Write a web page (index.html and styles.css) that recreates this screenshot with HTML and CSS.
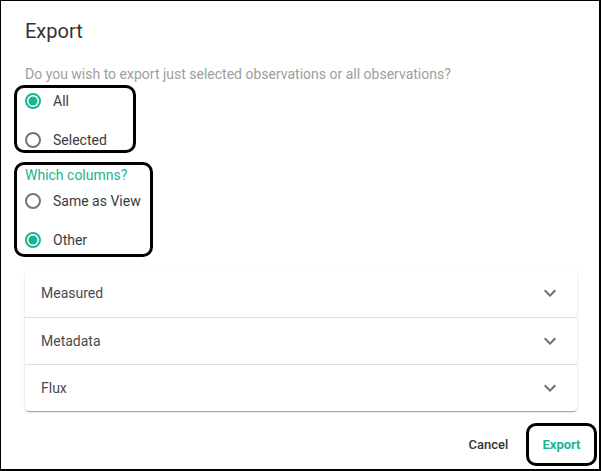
FILE: index.html
```html
<!DOCTYPE html>
<html>
<head>
<meta charset="utf-8">
<link rel="stylesheet" href="styles.css">
</head>
<body>
<div class="dialog">
  <h1 class="title">Export</h1>
  <p class="subtitle">Do you wish to export just selected observations or all observations?</p>

  <div class="group group-a">
    <label class="radio-row">
      <svg class="radio" viewBox="0 0 20 20" width="20" height="20"><circle cx="10" cy="10" r="7" fill="none" stroke="#1ab394" stroke-width="2"/><circle cx="10" cy="10" r="4.5" fill="#1ab394"/></svg>
      <span>All</span>
    </label>
    <label class="radio-row">
      <svg class="radio" viewBox="0 0 20 20" width="20" height="20"><circle cx="10" cy="10" r="7" fill="none" stroke="#757575" stroke-width="2"/></svg>
      <span>Selected</span>
    </label>
  </div>

  <div class="group group-b">
    <div class="group-label">Which columns?</div>
    <label class="radio-row">
      <svg class="radio" viewBox="0 0 20 20" width="20" height="20"><circle cx="10" cy="10" r="7" fill="none" stroke="#757575" stroke-width="2"/></svg>
      <span>Same as View</span>
    </label>
    <label class="radio-row">
      <svg class="radio" viewBox="0 0 20 20" width="20" height="20"><circle cx="10" cy="10" r="7" fill="none" stroke="#1ab394" stroke-width="2"/><circle cx="10" cy="10" r="4.5" fill="#1ab394"/></svg>
      <span>Other</span>
    </label>
  </div>

  <div class="accordion">
    <div class="panel">
      <span>Measured</span>
      <svg class="chev" viewBox="0 0 24 24" width="24" height="24"><path d="M7.41 8.59L12 13.17l4.59-4.58L18 10l-6 6-6-6 1.41-1.41z" fill="#6f6f6f"/></svg>
    </div>
    <div class="panel">
      <span>Metadata</span>
      <svg class="chev" viewBox="0 0 24 24" width="24" height="24"><path d="M7.41 8.59L12 13.17l4.59-4.58L18 10l-6 6-6-6 1.41-1.41z" fill="#6f6f6f"/></svg>
    </div>
    <div class="panel">
      <span>Flux</span>
      <svg class="chev" viewBox="0 0 24 24" width="24" height="24"><path d="M7.41 8.59L12 13.17l4.59-4.58L18 10l-6 6-6-6 1.41-1.41z" fill="#6f6f6f"/></svg>
    </div>
  </div>

  <div class="actions">
    <button class="btn btn-cancel">Cancel</button>
    <button class="btn btn-export">Export</button>
  </div>
</div>
</body>
</html>
```

FILE: styles.css
```css
* { box-sizing: border-box; }
html, body { margin: 0; padding: 0; background: #fff; }
body { font-family: Roboto, "Noto Sans", Arial, sans-serif; }

.dialog {
  width: 601px;
  height: 471px;
  border-style: solid;
  border-color: #000;
  border-width: 1px 2px 2px 1px;
  padding: 0 0 0 24px;
  display: flex;
  flex-direction: column;
  overflow: hidden;
}

.title {
  margin: 14px 0 0;
  font-size: 20px;
  line-height: 32px;
  font-weight: 400;
  color: #333;
}

.subtitle {
  margin: 17px 0 0;
  font-size: 14px;
  line-height: 20px;
  color: #9e9e9e;
}

.group {
  border: 3px solid #000;
  border-radius: 10px;
  margin-left: -11px;
  padding-left: 6px;
  display: flex;
  flex-direction: column;
}

.group-a {
  width: 122px;
  margin-top: 1px;
  padding-top: 3px;
  gap: 19px;
}

.group-b {
  width: 139px;
  margin-top: 9px;
  padding-bottom: 4px;
  gap: 6px;
}

.group-b .radio-row + .radio-row { margin-top: 13px; }

.group-label {
  padding-left: 2px;
  font-size: 14px;
  line-height: 20px;
  color: #1ab394;
}

.radio-row {
  display: flex;
  align-items: center;
  gap: 10px;
  height: 20px;
  font-size: 14px;
  color: #3c3c3c;
}

.radio { display: block; flex: none; }

.accordion {
  margin-top: 12px;
  width: 552px;
  border-radius: 4px;
  background: #fff;
  box-shadow: 0 2px 1px -1px rgba(0,0,0,0.2), 0 1px 1px 0 rgba(0,0,0,0.14), 0 1px 3px 0 rgba(0,0,0,0.12);
}

.panel {
  height: 48px;
  display: flex;
  align-items: center;
  justify-content: space-between;
  padding: 0 15px 0 16px;
  font-size: 14px;
  color: #4a4a4a;
}

.panel + .panel { border-top: 1px solid #dedede; height: 47px; }

.chev { display: block; }

.actions {
  margin-top: 12px;
  display: flex;
  justify-content: flex-end;
  align-items: center;
  gap: 10px;
  padding-right: 2px;
}

.btn {
  font-family: Roboto, "Noto Sans", Arial, sans-serif;
  font-size: 13px;
  background: none;
  border: none;
  padding: 0;
  cursor: pointer;
}

.btn-cancel {
  width: 55px;
  height: 36px;
  font-weight: 500;
  color: #333;
}

.btn-export {
  width: 71px;
  height: 43px;
  border: 3px solid #000;
  border-radius: 10px;
  font-weight: 700;
  color: #1ab394;
}
```
